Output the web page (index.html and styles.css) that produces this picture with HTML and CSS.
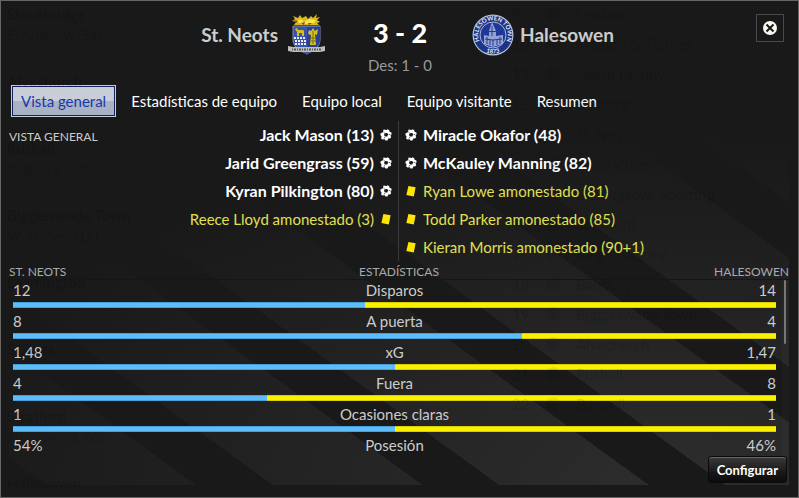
FILE: index.html
```html
<!DOCTYPE html>
<html lang="es">
  <head>
    <meta charset="utf-8">
    <meta name="viewport" content="width=device-width, initial-scale=1">
    <title>St. Neots 3 - 2 Halesowen</title>
    <link rel="stylesheet" href="styles.css">
  </head>

  <body>
    <!-- shared icons -->
    <svg class="defs" aria-hidden="true">
      <symbol id="ball" viewBox="0 0 12 12">
        <path fill="#fff" d="M3.6 0.6 L6.6 0.9 L7.6 0.2 L9.2 1.2 L9.6 2.8 L11.4 3.4 L11.6 5.2 L10.6 6.4 L11.2 8.4 L9.8 9.4 L8.6 9.2 L7.4 11.4 L5.4 11.6 L4.8 10.2 L2.4 10.6 L1 9.2 L1.6 7.4 L0.4 6 L0.6 4.2 L2.6 3.4 Z" />
        <path fill="#191919" d="M4.6 4.2 L7.2 4 L8.2 5.6 L7.2 7.6 L5 7.6 L4 6 Z" />
        <path stroke="#191919" stroke-width="0.6" d="M4.4 3.8 L3.2 2.4 M8.6 5.6 L10.4 5.4 M4.8 8 L4 9.6" />
      </symbol>
      <symbol id="card" viewBox="0 0 12 12">
        <path fill="#ffe600" d="M3.4 0.9 L10.6 2.2 L8.8 11.4 L1.4 10 Z" />
      </symbol>
    </svg>

    <main class="match">
      <header class="scoreboard">
        <div class="team home">
          <h2>St. Neots</h2>
          <svg class="crest" viewBox="0 0 42 42" role="img" aria-label="Escudo de St. Neots">
            <path fill="#d9b91c" d="M8 11 L10 8 L6 7 L9 5 L7 2 L12 4 L14 1 L16 4 L20 2 L22 5 L25 2 L27 4 L31 0 L30 4 L34 3 L31 6 L34 8 L31 9 L33 11 Z" />
            <path fill="#f6e84a" d="M11 7 L15 5 L18 8 L23 5 L30 6 L28 9 L20 10 L13 9 Z" />
            <path fill="#a3421b" d="M7 6 L12 7 L10 9 Z M15 9 L19 8 L18 11 Z M22 9 L26 9 L23 11 Z" />
            <path fill="#3b52a6" stroke="#7f8ab0" d="M7 12 H34 V26 C34 34 26 37 21 40 C15 37 7 34 7 26 Z" />
            <path fill="#2a4090" d="M21 13 H34 V26 C34 33 26 36 21 39 Z" />
            <path fill="#d8bd20" d="M9 15 L11 14 L12 16 H17 L18 17 V22 H16 V19 H13 V22 H11 V18 Z" />
            <path fill="#d8bd20" d="M25 17 L27 14 L29 17 L32 15 L31 21 L29 20 L30 31 H24 L25 21 L22 20 L23 16 Z" />
            <path fill="none" stroke="#7d6d12" d="M27 17 V30 M25 24 H30 M25 27 H30" />
            <path fill="none" stroke="#e9edf7" stroke-width="2" stroke-dasharray="2 1" d="M8 24 H20 M9 27 H20 M9 30 H20" />
            <path fill="#bdbdba" d="M2 32 L7 33 H34 L39 32 V37 L34 38 H7 L2 37 Z" />
            <path fill="none" stroke="#55555a" stroke-width="2" stroke-dasharray="1 1 2 1" d="M6 35.500 H35" />
            <path fill="#3b52a6" d="M18 38 H24 L21 41 Z" />
          </svg>
        </div>
        <div class="score">
          <h1>3 - 2</h1>
          <p>Des: 1 - 0</p>
        </div>
        <div class="team away">
          <svg class="crest" viewBox="0 0 42 42" role="img" aria-label="Escudo de Halesowen">
            <defs>
              <path id="ring-top" d="M7.200 26 A14.700 14.700 0 1 1 34.800 26" />
              <path id="ring-bottom" d="M9 35 A18.300 18.300 0 0 0 33 35" />
            </defs>
            <circle cx="21" cy="21" r="20.500" fill="#b9c3df" />
            <circle cx="21" cy="21" r="19.300" fill="#1c3585" />
            <circle cx="21" cy="21" r="13" fill="#20389a" stroke="#aab5d8" />
            <text class="crest-text"><textPath href="#ring-top" startOffset="50%">HALESOWEN TOWN</textPath></text>
            <text class="crest-text"><textPath href="#ring-bottom" startOffset="50%">1873</textPath></text>
            <path fill="#94a2cf" d="M20 8 L24 17 V22 L31 21 V30 L21 33 L12 30 V21 L17 22 V17 Z" />
            <path fill="none" stroke="#20389a" d="M20 12 V22 M17 17.500 H24 M13 25 L21 26 L30 25 M15 23 V30 M18 26 V31 M21 26 V32 M25 26 V31 M28 23 V30" />
          </svg>
          <h2>Halesowen</h2>
        </div>
        <button class="close" type="button" aria-label="Cerrar">
          <svg viewBox="0 0 16 16" aria-hidden="true">
            <circle cx="8" cy="8" r="7" fill="#fbf8f0" />
            <path stroke="#191919" stroke-width="2" d="M4.500 4.500 L11.500 11.500 M11.500 4.500 L4.500 11.500" />
          </svg>
        </button>
      </header>

      <nav class="tabs">
        <button type="button" class="active" aria-current="page">Vista general</button>
        <button type="button">Estadísticas de equipo</button>
        <button type="button">Equipo local</button>
        <button type="button">Equipo visitante</button>
        <button type="button">Resumen</button>
      </nav>

      <div class="panel">
        <section class="overview">
          <h3>VISTA GENERAL</h3>
          <ul class="events home">
            <li class="goal">Jack Mason (13)<svg><use href="#ball" /></svg></li>
            <li class="goal">Jarid Greengrass (59)<svg><use href="#ball" /></svg></li>
            <li class="goal">Kyran Pilkington (80)<svg><use href="#ball" /></svg></li>
            <li class="booked">Reece Lloyd amonestado (3)<svg><use href="#card" /></svg></li>
          </ul>
          <ul class="events away">
            <li class="goal"><svg><use href="#ball" /></svg>Miracle Okafor (48)</li>
            <li class="goal"><svg><use href="#ball" /></svg>McKauley Manning (82)</li>
            <li class="booked"><svg><use href="#card" /></svg>Ryan Lowe amonestado (81)</li>
            <li class="booked"><svg><use href="#card" /></svg>Todd Parker amonestado (85)</li>
            <li class="booked"><svg><use href="#card" /></svg>Kieran Morris amonestado (90+1)</li>
          </ul>
        </section>

        <section class="stats">
          <div class="stats-head">
            <h3>ST. NEOTS</h3>
            <h3>ESTADÍSTICAS</h3>
            <h3>HALESOWEN</h3>
          </div>
          <div class="stats-scroll">
            <div class="stats-list">
              <div class="stat">
                <span>12</span><span>Disparos</span><span>14</span>
                <div class="bar"><div style="width: 46.150%"></div></div>
              </div>
              <div class="stat">
                <span>8</span><span>A puerta</span><span>4</span>
                <div class="bar"><div style="width: 66.670%"></div></div>
              </div>
              <div class="stat">
                <span>1,48</span><span>xG</span><span>1,47</span>
                <div class="bar"><div style="width: 50.100%"></div></div>
              </div>
              <div class="stat">
                <span>4</span><span>Fuera</span><span>8</span>
                <div class="bar"><div style="width: 33.330%"></div></div>
              </div>
              <div class="stat">
                <span>1</span><span>Ocasiones claras</span><span>1</span>
                <div class="bar"><div style="width: 50%"></div></div>
              </div>
              <div class="stat">
                <span>54%</span><span>Posesión</span><span>46%</span>
              </div>
            </div>
            <div class="scrollbar"><div class="thumb"></div></div>
          </div>
        </section>

        <footer>
          <button class="configure" type="button">Configurar</button>
        </footer>
      </div>

      <!-- results and league table showing faintly through the window -->
      <div class="ghost" aria-hidden="true">
        <ul class="ghost-results">
          <li>Stourbridge<small>E. Ameyaw (54)</small></li>
          <li>Alvechurch</li>
          <li>Rushall<small>K. Boyce (32)</small></li>
          <li>Biggleswade Town<small>W. Harvey (19)</small></li>
          <li>Leamington</li>
          <li>St. Ives</li>
          <li>Stratford<small>J. Umoro (3, 60)</small></li>
          <li>Halesowen</li>
        </ul>
        <ul class="ghost-table">
          <li><span>9</span><i></i>Leiston</li>
          <li><span>10</span><i></i>Maldon &amp; Tiptree</li>
          <li><span>11</span><i></i>North Ferriby</li>
          <li><span>12</span><i></i>Bedford</li>
          <li><span>13</span><i></i>St. Ives</li>
          <li><span>14</span><i></i>Mole Valley</li>
          <li><span>15</span><i></i>Bromsgrove Sporting</li>
          <li><span>16</span><i></i>Stamford</li>
          <li><span>17</span><i></i>Kings Langley</li>
          <li><span>18</span><i></i>Banbury</li>
          <li><span>19</span><i></i>Biggleswade Town</li>
          <li><span>20</span><i></i>Alvechurch</li>
          <li><span>21</span><i></i>Rushall</li>
          <li><span>22</span><i></i>Barwell</li>
        </ul>
      </div>
    </main>
  </body>
</html>
```

FILE: styles.css
```css
* {
  box-sizing: border-box;
}
body {
  margin: 0;
  background: #191919;
  color: #ccc;
  font-family: Lato, "Open Sans", sans-serif;
  font-size: 15px;
  line-height: 20px;
}
h1, h2, h3, p, ul {
  margin: 0;
  padding: 0;
  font-weight: 400;
}
li {
  list-style: none;
}
button {
  font: inherit;
  color: inherit;
  background: none;
  border: 0;
  padding: 0;
  white-space: nowrap;
}
.defs {
  display: none;
}

/* window */
.match {
  position: relative;
  display: flex;
  flex-direction: column;
  min-height: 100vh;
  padding: 0 9px 12px 8px;
  border: 1px solid #666;
}

/* faded screen behind the window */
.ghost {
  position: absolute;
  inset: 0;
  display: flex;
  justify-content: space-between;
  overflow: hidden;
  padding: 3px 6px;
  color: rgba(0, 0, 0, 0.12);
  pointer-events: none;
}
.ghost-results li {
  height: 67px;
  font-weight: 700;
}
.ghost-results small {
  display: block;
  padding-top: 1px;
  font-size: 14px;
  font-weight: 400;
}
.ghost-table {
  width: 280px;
}
.ghost-table li {
  display: flex;
  align-items: center;
  gap: 12px;
  height: 30px;
  padding-bottom: 10px;
}
.ghost-table span {
  width: 18px;
}
.ghost-table i {
  width: 14px;
  height: 14px;
  margin: 0 4px;
  border-radius: 50%;
  background: rgba(0, 0, 0, 0.06);
}

/* score */
.scoreboard {
  display: grid;
  grid-template-columns: 1fr 144px 1fr;
  align-items: start;
  position: relative;
  height: 84px;
  padding: 13px 0 0 2px;
}
.team {
  display: flex;
  align-items: center;
  gap: 6px;
}
.team.home {
  justify-content: flex-end;
  gap: 8px;
}
.team h2 {
  font-size: 19px;
  font-weight: 700;
}
.crest {
  width: 42px;
  height: 42px;
}
.crest-text {
  font-size: 6px;
  font-weight: 700;
  fill: #e6ebf7;
  text-anchor: middle;
}
.score {
  text-align: center;
}
.score h1 {
  color: #fff;
  font-size: 27px;
  font-weight: 900;
  line-height: 38px;
}
.score p {
  margin-top: 3px;
  color: #999;
}
.close {
  position: absolute;
  top: 13px;
  right: 5px;
  width: 28px;
  height: 28px;
  border: 1px solid #4a4a4a;
}
.close svg {
  display: block;
  width: 16px;
  height: 16px;
  margin: auto;
}

/* tabs */
.tabs {
  display: flex;
  gap: 5px;
  padding-left: 2px;
  color: #fff;
}
.tabs button {
  height: 32px;
  padding: 0 10px 1px;
}
.tabs .active {
  padding: 0 9px 1px;
  color: #1a3aa8;
  background: linear-gradient(#c9cdd8 50%, #a9b1c4 50%);
  border: 1px solid #c9cdd8;
  outline: 1px solid #12235f;
  outline-offset: -2px;
}

/* content, with diagonal stripes */
.panel {
  display: flex;
  flex-direction: column;
  flex: 1;
  margin-top: 4px;
  background:
    repeating-linear-gradient(36deg, #191919 0 22px, transparent 22px 110px, #191919 110px 133px),
    radial-gradient(ellipse 95% 95% at 85% 100%, #2d2d2d, #212121 60%, #191919);
}
.overview {
  display: grid;
  grid-template-columns: 110px 1fr calc(50% + 1px);
}
h3 {
  color: #aaa;
  font-size: 12px;
}
.overview h3 {
  padding-top: 6px;
  color: #ccc;
}
.events li {
  display: flex;
  align-items: center;
  gap: 6px;
  height: 28px;
}
.events svg {
  width: 12px;
  height: 12px;
}
.events.home li {
  justify-content: flex-end;
  padding-right: 6px;
}
.events.away {
  padding-left: 6px;
  border-left: 1px solid #3a3a3a;
}
.events .goal {
  color: #fff;
  font-size: 16px;
  font-weight: 700;
}
.booked {
  color: #e0e052;
}

/* stats */
.stats-head,
.stat {
  display: grid;
  grid-template-columns: 1fr auto 1fr;
  align-content: start;
}
.stats-head {
  padding-top: 3px;
  line-height: 16px;
  box-shadow: inset 0 -1px #161616;
}
.stats-head :last-child,
.stat span:nth-child(3) {
  text-align: right;
}
.stats-scroll {
  display: flex;
  gap: 6px;
  padding-left: 4px;
}
.stats-list {
  flex: 1;
}
.stat {
  height: 31px;
}
.stat:last-child {
  height: 21px;
}
.bar {
  grid-column: 1 / -1;
  height: 6px;
  margin-top: 2px;
  background: #fbf000;
  border: solid #d8cd00;
  border-width: 1px 0;
}
.bar div {
  height: 6px;
  margin-top: -1px;
  background: #5ebcf8;
  border: solid #469fd8;
  border-width: 1px 0;
}
.scrollbar {
  width: 7px;
  background: rgba(255, 255, 255, 0.02);
}
.thumb {
  width: 2px;
  height: 64px;
  margin-left: 2px;
  border-radius: 1px;
  background: #777;
}

footer {
  display: flex;
  justify-content: flex-end;
  padding-right: 2px;
}
.configure {
  height: 27px;
  padding: 0 8px;
  color: #fff;
  font-size: 13px;
  font-weight: 700;
  background: linear-gradient(#3a3a3a, #191919 60%, #0c0c0c);
  border: 1px solid #0a0a0a;
  border-radius: 3px;
  box-shadow: inset 0 1px #666;
}
```
